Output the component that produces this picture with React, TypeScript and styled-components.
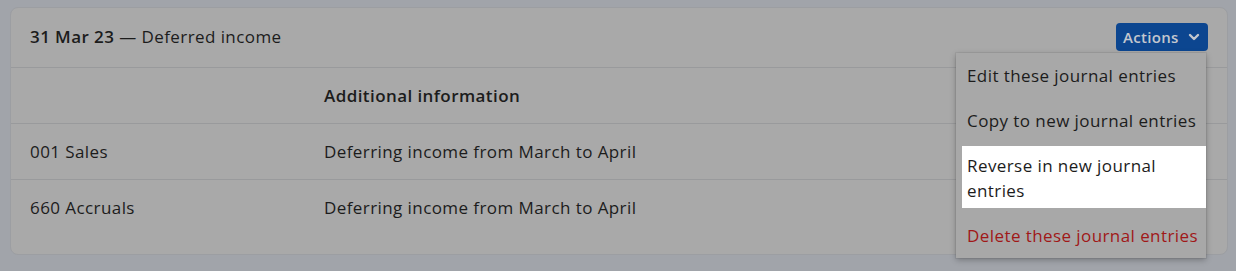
import React from 'react';
import styled, { createGlobalStyle } from 'styled-components';

const GlobalStyle = createGlobalStyle`
    body {
        margin: 0;
        background: #a1a4aa;
        font-family: "Open Sans", Lato, sans-serif;
        color: #1c1c1c;
        letter-spacing: 0.42px;
    }
`;

const SPage = styled.div`
    padding: 7px 8px 16px 10px;
`;

const SCard = styled.section`
    background: #a9a9a9;
    border: 1px solid #9c9ea2;
    border-radius: 8px;
    height: 248px;
    box-sizing: border-box;
`;

const SHeader = styled.header`
    display: flex;
    align-items: center;
    justify-content: space-between;
    height: 60px;
    padding: 0 19px 0 19px;
    border-bottom: 1px solid #999a9c;
    box-sizing: border-box;
`;

const STitle = styled.h2`
    margin: 0 0 3px;
    font-size: 17px;
    font-weight: 400;

    strong {
        font-weight: 600;
    }
`;

const SActionsWrap = styled.div`
    position: relative;
    align-self: flex-start;
    margin-top: 15px;
`;

const SActionsButton = styled.button`
    display: flex;
    align-items: center;
    justify-content: space-between;
    height: 28px;
    padding: 0 8px 0 7px;
    width: 92px;
    border: none;
    border-radius: 4px;
    background: #0c4690;
    color: #c3c7ce;
    font-family: inherit;
    font-size: 15px;
    font-weight: 600;
    letter-spacing: 0.3px;
    cursor: pointer;
`;

const SMenu = styled.ul`
    position: absolute;
    top: 30px;
    right: 2px;
    width: 250px;
    margin: 0;
    padding: 0;
    list-style: none;
    background: #a8a8a8;
    box-shadow: 0 2px 6px rgba(0, 0, 0, 0.28), 0 0 0 1px rgba(0, 0, 0, 0.05);
    z-index: 10;
`;

const SMenuItem = styled.li<{ $active?: boolean; $danger?: boolean }>`
    padding: ${({ $active }) => ($active ? '7px 6px 5px 5px' : '10px 4px 10px 11px')};
    margin: ${({ $active }) => ($active ? '3px 0 5px 6px' : '0')};
    background: ${({ $active }) => ($active ? '#ffffff' : 'transparent')};
    color: ${({ $danger }) => ($danger ? '#a01818' : '#1c1c1c')};
    font-size: 17px;
    line-height: 25px;
    white-space: ${({ $active }) => ($active ? 'normal' : 'nowrap')};
    cursor: pointer;
`;

const STable = styled.table`
    width: 100%;
    border-collapse: collapse;
    font-size: 17px;
`;

const SCell = styled.td<{ $head?: boolean }>`
    height: 55px;
    padding: 0 19px;
    text-align: left;
    font-weight: ${({ $head }) => ($head ? 600 : 400)};
    border-bottom: 1px solid #999a9c;
    vertical-align: middle;

    &:first-child {
        width: 256px;
    }
`;

const SRow = styled.tr`
    &:last-child td {
        border-bottom: none;
    }
`;

const Chevron = () => (
    <svg width="12" height="12" viewBox="0 0 12 12" fill="none">
        <polyline points="2,4 6,8 10,4" stroke="currentColor" strokeWidth="2.4" strokeLinecap="round" strokeLinejoin="round" />
    </svg>
);

const rows = [
    { account: '001 Sales', info: 'Deferring income from March to April' },
    { account: '660 Accruals', info: 'Deferring income from March to April' },
];

const App = () => {
    return (
        <SPage>
            <GlobalStyle />
            <SCard>
                <SHeader>
                    <STitle>
                        <strong>31 Mar 23</strong> — Deferred income
                    </STitle>
                    <SActionsWrap>
                        <SActionsButton>
                            Actions <Chevron />
                        </SActionsButton>
                        <SMenu>
                            <SMenuItem>Edit these journal entries</SMenuItem>
                            <SMenuItem>Copy to new journal entries</SMenuItem>
                            <SMenuItem $active>Reverse in new journal entries</SMenuItem>
                            <SMenuItem $danger>Delete these journal entries</SMenuItem>
                        </SMenu>
                    </SActionsWrap>
                </SHeader>
                <STable>
                    <tbody>
                        <SRow>
                            <SCell $head></SCell>
                            <SCell $head>Additional information</SCell>
                        </SRow>
                        {rows.map((r) => (
                            <SRow key={r.account}>
                                <SCell>{r.account}</SCell>
                                <SCell>{r.info}</SCell>
                            </SRow>
                        ))}
                    </tbody>
                </STable>
            </SCard>
        </SPage>
    );
};

export default App;
